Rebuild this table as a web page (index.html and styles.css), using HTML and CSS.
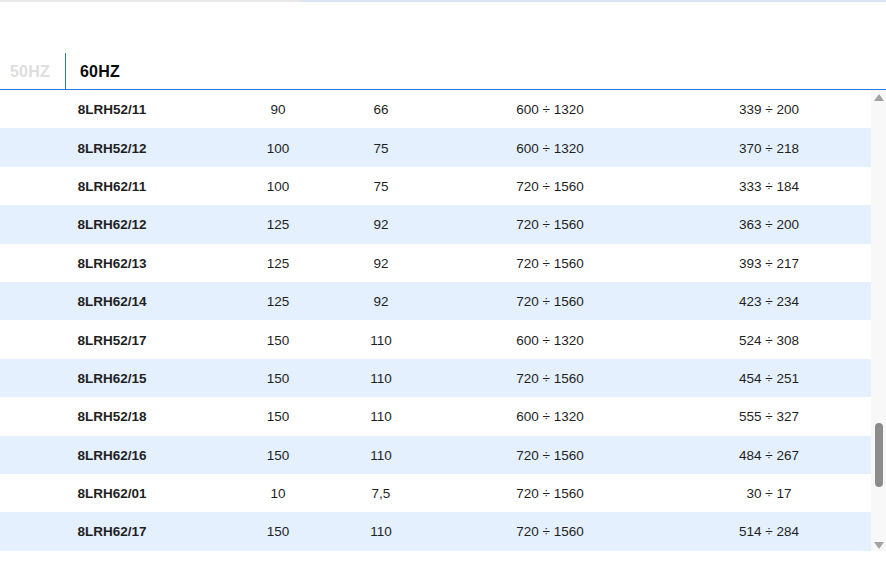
FILE: index.html
```html
<!DOCTYPE html>
<html>
<head>
<meta charset="utf-8">
<link rel="stylesheet" href="styles.css">
</head>
<body>
<div class="progress"><div class="progress-done"></div><div class="progress-rest"></div></div>
<div class="tabs">
  <div class="tab tab-inactive">50HZ</div>
  <div class="tab tab-active">60HZ</div>
</div>
<div class="table-wrap">
  <div class="table">
    <div class="row"><div class="c name">8LRH52/11</div><div class="c">90</div><div class="c">66</div><div class="c">600 ÷ 1320</div><div class="c">339 ÷ 200</div></div>
    <div class="row"><div class="c name">8LRH52/12</div><div class="c">100</div><div class="c">75</div><div class="c">600 ÷ 1320</div><div class="c">370 ÷ 218</div></div>
    <div class="row"><div class="c name">8LRH62/11</div><div class="c">100</div><div class="c">75</div><div class="c">720 ÷ 1560</div><div class="c">333 ÷ 184</div></div>
    <div class="row"><div class="c name">8LRH62/12</div><div class="c">125</div><div class="c">92</div><div class="c">720 ÷ 1560</div><div class="c">363 ÷ 200</div></div>
    <div class="row"><div class="c name">8LRH62/13</div><div class="c">125</div><div class="c">92</div><div class="c">720 ÷ 1560</div><div class="c">393 ÷ 217</div></div>
    <div class="row"><div class="c name">8LRH62/14</div><div class="c">125</div><div class="c">92</div><div class="c">720 ÷ 1560</div><div class="c">423 ÷ 234</div></div>
    <div class="row"><div class="c name">8LRH52/17</div><div class="c">150</div><div class="c">110</div><div class="c">600 ÷ 1320</div><div class="c">524 ÷ 308</div></div>
    <div class="row"><div class="c name">8LRH62/15</div><div class="c">150</div><div class="c">110</div><div class="c">720 ÷ 1560</div><div class="c">454 ÷ 251</div></div>
    <div class="row"><div class="c name">8LRH52/18</div><div class="c">150</div><div class="c">110</div><div class="c">600 ÷ 1320</div><div class="c">555 ÷ 327</div></div>
    <div class="row"><div class="c name">8LRH62/16</div><div class="c">150</div><div class="c">110</div><div class="c">720 ÷ 1560</div><div class="c">484 ÷ 267</div></div>
    <div class="row"><div class="c name">8LRH62/01</div><div class="c">10</div><div class="c">7,5</div><div class="c">720 ÷ 1560</div><div class="c">30 ÷ 17</div></div>
    <div class="row"><div class="c name">8LRH62/17</div><div class="c">150</div><div class="c">110</div><div class="c">720 ÷ 1560</div><div class="c">514 ÷ 284</div></div>
  </div>
  <div class="scrollbar">
    <div class="arrow arrow-up"></div>
    <div class="track"><div class="thumb"></div></div>
    <div class="arrow arrow-down"></div>
  </div>
</div>
</body>
</html>
```

FILE: styles.css
```css
html, body {
  margin: 0;
  padding: 0;
  background: #ffffff;
}
body {
  width: 886px;
  height: 570px;
  overflow: hidden;
  font-family: "Liberation Sans", Arial, sans-serif;
  color: #1f1f1f;
}
.progress {
  display: flex;
  height: 2px;
}
.progress-done {
  width: 301px;
  background: #e8e8e8;
}
.progress-rest {
  flex: 1;
  background: #d9e5f4;
}
.tabs {
  display: flex;
  margin-top: 51px;
  height: 36px;
  border-bottom: 1px solid #2a78e4;
}
.tab {
  display: flex;
  align-items: center;
  font-weight: bold;
  font-size: 16px;
  letter-spacing: 0.2px;
  padding-top: 1px;
}
.tab-inactive {
  width: 55px;
  padding-left: 10px;
  color: #dedede;
  border-right: 1px solid #2a78e4;
}
.tab-active {
  padding-left: 14px;
  color: #0a0a0a;
}
.table-wrap {
  display: flex;
  height: 461px;
}
.table {
  width: 871px;
}
.row {
  display: grid;
  grid-template-columns: 224px 108px 98px 240px 198px;
  height: 38.4px;
  align-items: center;
  font-size: 13.5px;
}
.row:nth-child(even) {
  background: #e4f0fd;
}
.c {
  text-align: center;
  padding-top: 1px;
}
.name {
  font-weight: bold;
}
.scrollbar {
  width: 15px;
  background: #f8f8f8;
  display: flex;
  flex-direction: column;
  align-items: center;
}
.arrow {
  width: 0;
  height: 0;
  border-left: 5px solid transparent;
  border-right: 5px solid transparent;
}
.arrow-up {
  margin-top: 4px;
  border-bottom: 7px solid #a3a3a3;
}
.arrow-down {
  margin-bottom: 2px;
  border-top: 7px solid #a3a3a3;
}
.track {
  flex: 1;
  width: 100%;
  display: flex;
  justify-content: center;
  align-items: flex-start;
}
.thumb {
  margin-top: 322px;
  width: 8px;
  height: 64px;
  border-radius: 4px;
  background: #8c8c8c;
}
```
